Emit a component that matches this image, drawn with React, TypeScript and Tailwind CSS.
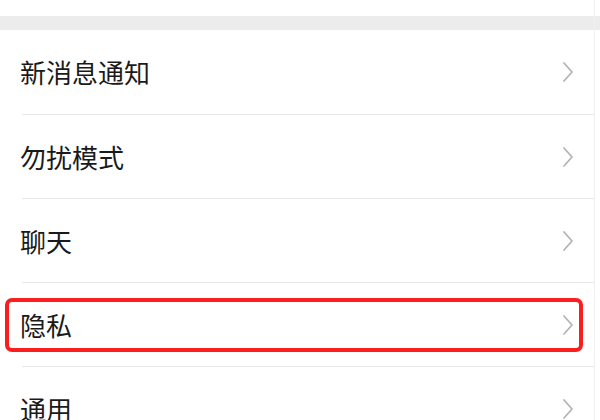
import React from "react";

const Chevron = () => (
  <svg width="12" height="22" viewBox="0 0 12 22" fill="none">
    <path d="M2 2 L10 11 L2 20" stroke="#b4b4b4" strokeWidth="1.8" strokeLinecap="round" strokeLinejoin="round" />
  </svg>
);

const items = ["新消息通知", "勿扰模式", "聊天", "隐私", "通用"];

export default function App() {
  return (
    <div
      className="w-[600px] h-[420px] overflow-hidden bg-white relative"
      style={{ fontFamily: '"Noto Sans CJK SC", "Noto Sans", sans-serif' }}
    >
      <div className="h-[16px] bg-white" />
      <div className="h-[14px] bg-[#ececec]" />
      <div className="flex flex-col">
        {items.map((t, i) => (
          <div key={t} className="relative h-[84px] flex flex-col">
            {i > 0 && <div className="ml-[22px] mr-[6px] h-px bg-[#e8e8e8]" />}
            <div className="flex-1 flex items-center justify-between pl-[20px] pr-[26px]">
              <span className="text-[26px] leading-none text-[#1a1a1a]">{t}</span>
              <Chevron />
            </div>
            {t === "隐私" && (
              <div className="absolute left-[5px] top-[16px] w-[578px] h-[54px] border-[4px] border-[#fa1e1e] rounded-[7px]" />
            )}
          </div>
        ))}
      </div>
      <div className="absolute right-[5px] top-0 w-px h-full bg-[#f0f0f0]" />
    </div>
  );
}
